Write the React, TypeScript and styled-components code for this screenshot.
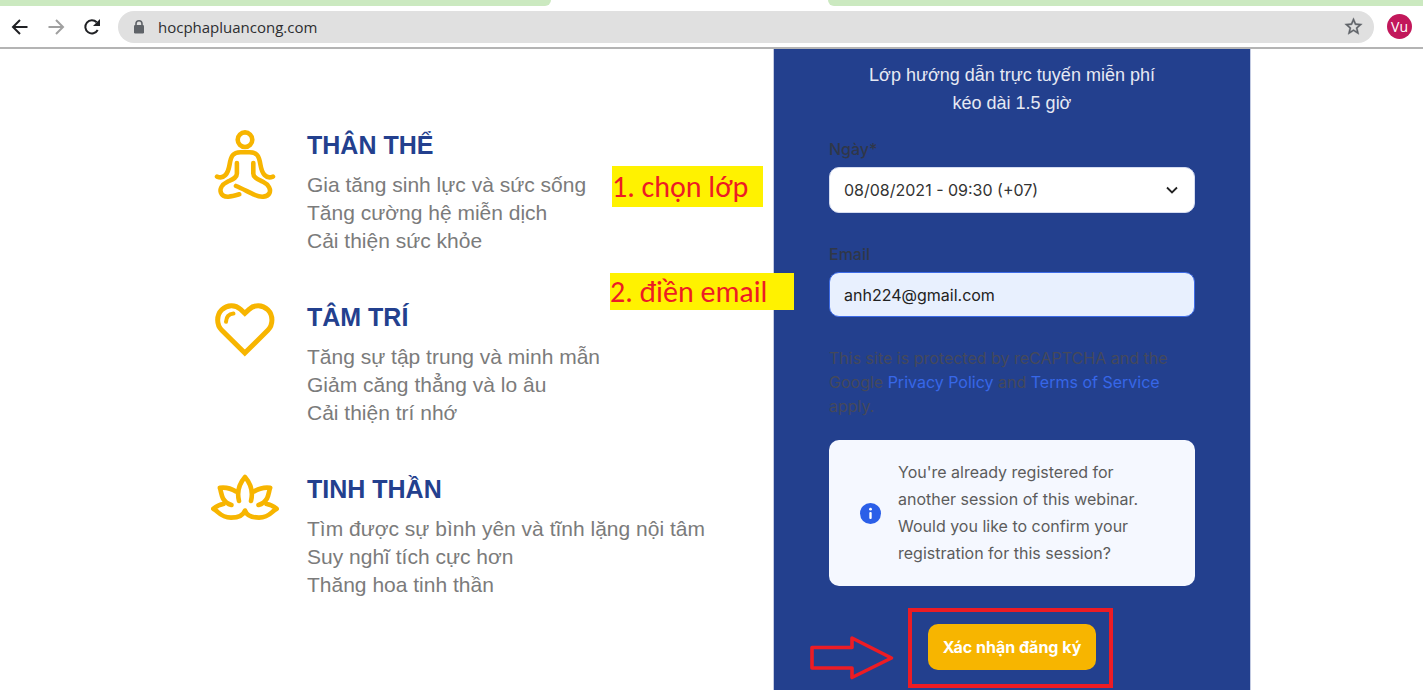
import React from "react";
import styled, { createGlobalStyle } from "styled-components";

const GlobalStyle = createGlobalStyle`
  * { box-sizing: border-box; }
  body {
    margin: 0;
    background: #fff;
    font-family: "Liberation Sans", Arial, sans-serif;
  }
`;

const Page = styled.div`
  display: flex;
  flex-direction: column;
  min-height: 100vh;
  overflow-x: hidden;
`;

/* Browser chrome */
const Chrome = styled.header`
  border-bottom: 2px solid #b4b4b4;
`;

const TabStrip = styled.div`
  display: flex;
  gap: 277px;
  height: 6px;
`;

const TabEdge = styled.div<{ $side: "left" | "right" }>`
  background: #cbe9c0;
  flex: ${(p) => (p.$side === "left" ? "0 1 551px" : "1 1 0")};
  border-radius: ${(p) => (p.$side === "left" ? "0 0 8px 0" : "0 0 0 8px")};
`;

const Toolbar = styled.div`
  display: flex;
  align-items: center;
  height: 41px;
  padding: 0 11px 0 10px;
`;

const NavButton = styled.button<{ $dim?: boolean }>`
  display: grid;
  place-items: center;
  width: 20px;
  height: 20px;
  margin-right: 16px;
  padding: 0;
  border: 0;
  background: none;
  color: ${(p) => (p.$dim ? "#a0a0a0" : "#202124")};
`;

const AddressBar = styled.div`
  display: flex;
  flex: 1;
  align-items: center;
  height: 32px;
  margin-right: 13px;
  padding: 0 10px 0 14px;
  border-radius: 16px;
  background: #e0e0e0;
`;

const Address = styled.input`
  flex: 1;
  min-width: 0;
  margin-left: 12px;
  padding: 0;
  border: 0;
  outline: 0;
  background: none;
  color: #2d2e30;
  font: 15px/24px "Open Sans", sans-serif;
`;

const IconButton = styled.button`
  display: grid;
  place-items: center;
  padding: 0;
  border: 0;
  background: none;
  color: #5f6368;
`;

const Avatar = styled.button`
  width: 25px;
  height: 25px;
  padding: 0;
  border: 0;
  border-radius: 50%;
  background: #c2185b;
  color: #fff;
  font: 14px/25px "Open Sans", sans-serif;
`;

/* Page content */
const Main = styled.main`
  display: flex;
  flex: 1;
  width: 100%;
  max-width: 1079px;
  margin: 0 auto;
`;

const Benefits = styled.section`
  display: flex;
  flex: 1;
  flex-direction: column;
  gap: 46px;
  padding: 80px 0 0 39px;
`;

const Benefit = styled.article`
  display: flex;
  gap: 28px;
`;

const BenefitIcon = styled.svg`
  flex: none;
  width: 68px;
  height: 72px;
  fill: none;
  stroke: #f7b500;
  stroke-width: 4.6;
  stroke-linecap: round;
  stroke-linejoin: round;
`;

const BenefitTitle = styled.h2`
  margin: 0 0 10px;
  color: #23408e;
  font-size: 25px;
  line-height: 32px;
`;

const BenefitList = styled.ul`
  margin: 0;
  padding: 0;
  list-style: none;
  color: #7b7b7b;
  font-size: 21px;
  line-height: 28px;
`;

const Panel = styled.form`
  width: 478px;
  padding: 12px 55px 20px;
  border: solid #c3cbe2;
  border-width: 0 1px;
  background: #23408e;
  font-family: Inter, sans-serif;
`;

const Intro = styled.p`
  margin: 0 0 20px;
  color: #e6e9f3;
  font: 18px/28px "Liberation Sans", Arial, sans-serif;
  text-align: center;
`;

const Field = styled.div`
  position: relative;
  margin-bottom: 29px;
`;

const Label = styled.label`
  display: block;
  margin-bottom: 6px;
  color: #303748;
  font-size: 16px;
  font-weight: 500;
  line-height: 24px;
`;

const SelectWrap = styled.div`
  display: grid;
  align-items: center;

  > * {
    grid-area: 1 / 1;
  }

  > svg {
    justify-self: end;
    margin-right: 16px;
    pointer-events: none;
  }
`;

const Select = styled.select`
  width: 100%;
  height: 46px;
  padding: 0 14px;
  border: 1px solid #d5dcf0;
  border-radius: 10px;
  appearance: none;
  background: #fff;
  color: #333;
  font: 16px Inter, sans-serif;
`;

const Input = styled.input`
  display: block;
  width: 100%;
  height: 45px;
  padding: 0 14px;
  border: 1px solid #3d6be6;
  border-radius: 10px;
  outline: 0;
  background: #e8f0fe;
  color: #222;
  font: 16px Inter, sans-serif;
`;

const Callout = styled.span<{ $gap: number; $width: number; $height: number }>`
  position: absolute;
  bottom: ${(p) => (p.$height > 40 ? 6 : 7)}px;
  right: calc(100% + ${(p) => p.$gap}px);
  width: ${(p) => p.$width}px;
  background: #fff200;
  color: #ed1c24;
  font: 30px/${(p) => p.$height}px Carlito, Lato, "Noto Sans", sans-serif;
  white-space: nowrap;
`;

const Legal = styled.p`
  margin: 0 0 22px;
  color: #45495a;
  font-size: 16px;
  line-height: 24px;

  a {
    color: #3767e8;
    text-decoration: none;
  }
`;

const Notice = styled.div`
  display: flex;
  align-items: center;
  gap: 17px;
  padding: 19px 50px 19px 31px;
  border-radius: 10px;
  background: #f5f8ff;
  color: #5c5c5c;
  font-size: 16px;
  line-height: 27px;

  svg {
    flex: none;
  }

  p {
    margin: 0;
  }
`;

const SubmitRow = styled.div`
  display: flex;
  justify-content: center;
  margin-top: 38px;
`;

const SubmitSpot = styled.div`
  position: relative;
`;

const Submit = styled.button`
  display: block;
  height: 46px;
  padding: 0 15px;
  border: 0;
  border-radius: 10px;
  background: #f7b500;
  color: #fff;
  font: 700 16px Inter, sans-serif;
`;

const RedFrame = styled.span`
  position: absolute;
  inset: -16px -17px -18px -20px;
  border: 4px solid #ed1c24;
  pointer-events: none;
`;

const RedArrow = styled.svg`
  position: absolute;
  top: 10px;
  right: calc(100% + 33px);
`;

const benefits = [
  {
    title: "THÂN THỂ",
    lines: ["Gia tăng sinh lực và sức sống", "Tăng cường hệ miễn dịch", "Cải thiện sức khỏe"],
    icon: (
      <>
        <circle cx="34" cy="10.7" r="7.3" />
        <path d="M6 47.6C13 50.5 17 45 18.6 35.5C20 27 22 23.2 29.5 23.2H38.5C46 23.2 48 27 49.4 35.5C51 45 55 50.5 62 47.6" />
        <path d="M25.9 34V44.5C25.9 49 21 50.5 16.5 52.8C10.5 55.8 8.5 60 10 63.8C12.5 70 21 67.5 28.3 65.3" />
        <path d="M42.3 34V44.5C42.3 49 47.5 50.5 52 52.8C58 55.8 60 60.5 58.5 64C56.5 68.5 49.500 68.5 44 66C38 63.3 31 59.5 25 57" />
      </>
    ),
  },
  {
    title: "TÂM TRÍ",
    lines: ["Tăng sự tập trung và minh mẫn", "Giảm căng thẳng và lo âu", "Cải thiện trí nhớ"],
    icon: (
      <>
        <path strokeLinejoin="miter" strokeWidth="5" d="M33.8 52L10.8 29.3C5.3 23.8 5.3 14.2 10.8 8.8C16.3 3.4 24.3 3.4 29.5 8.3L33.8 12.3L38.1 8.3C43.3 3.4 51.3 3.4 56.8 8.8C62.3 14.2 62.3 23.8 56.8 29.3Z" />
        <path strokeWidth="4" d="M15 20.8C15.3 15.8 18 13 22.5 12.6" />
      </>
    ),
  },
  {
    title: "TINH THẦN",
    lines: ["Tìm được sự bình yên và tĩnh lặng nội tâm", "Suy nghĩ tích cực hơn", "Thăng hoa tinh thần"],
    icon: (
      <>
        <path d="M28 28C25.5 18 28 11 34 4C40 11 42.5 18 40 28" />
        <path d="M25 18.5C20 15.3 15 14 8.8 14.8C10 18 10.3 22 12 25.5C14 29 17 31 20.5 32" />
        <path d="M43 18.5C48 15.3 53 14 59.2 14.8C58 18 57.7 22 56 25.5C54 29 51 31 47.5 32" />
        <path d="M12.500 31C9.500 31.300 5.500 33 2.300 35.800C7.500 38 9 44.600 20 44.600C28 44.600 32.500 42 34 37.500C35.500 42 40 44.600 48 44.600C59 44.600 60.500 38 65.700 35.800C62.500 33 58.500 31.300 55.500 31" />
      </>
    ),
  },
];

export default function App() {
  return (
    <Page>
      <GlobalStyle />
      <Chrome>
        <TabStrip>
          <TabEdge $side="left" />
          <TabEdge $side="right" />
        </TabStrip>
        <Toolbar>
          <NavButton type="button" aria-label="Back">
            <svg width="18" height="18" viewBox="0 0 18 18" fill="none" stroke="currentColor" strokeWidth="2">
              <path d="M16.5 9H2.5M9 2L2 9L9 16" />
            </svg>
          </NavButton>
          <NavButton type="button" aria-label="Forward" $dim>
            <svg width="18" height="18" viewBox="0 0 18 18" fill="none" stroke="currentColor" strokeWidth="2">
              <path d="M1.5 9H15.5M9 2L16 9L9 16" />
            </svg>
          </NavButton>
          <NavButton type="button" aria-label="Reload">
            <svg width="18" height="18" viewBox="0 0 18 18">
              <path d="M14.7 12A6.6 6.6 0 1 1 13.7 4.3" fill="none" stroke="currentColor" strokeWidth="2" />
              <path d="M17 1V8H10Z" fill="currentColor" />
            </svg>
          </NavButton>
          <AddressBar>
            <svg width="14" height="16" viewBox="0 0 14 16">
              <path d="M4 7V4.800a3 3 0 0 1 6 0V7" fill="none" stroke="#5f6368" strokeWidth="1.6" />
              <rect x="2" y="6" width="10" height="8.5" rx="1.2" fill="#5f6368" />
            </svg>
            <Address aria-label="Address" defaultValue="hocphapluancong.com" />
            <IconButton type="button" aria-label="Bookmark">
              <svg width="21" height="21" viewBox="0 0 24 24" fill="currentColor" stroke="currentColor" strokeWidth="0.4">
                <path d="M22 9.240l-7.190-.620L12 2 9.190 8.630 2 9.240l5.460 4.730L5.820 21 12 17.270 18.180 21l-1.630-7.030L22 9.240zM12 15.400l-3.760 2.270 1-4.280-3.320-2.880 4.380-.380L12 6.100l1.710 4.040 4.380.380-3.320 2.880 1 4.280L12 15.400z" />
              </svg>
            </IconButton>
          </AddressBar>
          <Avatar type="button">Vu</Avatar>
        </Toolbar>
      </Chrome>

      <Main>
        <Benefits>
          {benefits.map((b) => (
            <Benefit key={b.title}>
              <BenefitIcon viewBox="0 0 68 72" aria-hidden="true">
                {b.icon}
              </BenefitIcon>
              <div>
                <BenefitTitle>{b.title}</BenefitTitle>
                <BenefitList>
                  {b.lines.map((line) => (
                    <li key={line}>{line}</li>
                  ))}
                </BenefitList>
              </div>
            </Benefit>
          ))}
        </Benefits>

        <Panel onSubmit={(e) => e.preventDefault()}>
          <Intro>
            Lớp hướng dẫn trực tuyến miễn phí
            <br />
            kéo dài 1.5 giờ
          </Intro>
          <Field>
            <Label htmlFor="session">Ngày*</Label>
            <SelectWrap>
              <Select id="session">
                <option>08/08/2021 - 09:30 (+07)</option>
              </Select>
              <svg width="14" height="10" viewBox="0 0 14 10" fill="none" stroke="#222" strokeWidth="1.8">
                <path d="M2 2.500L7 7.500L12 2.500" />
              </svg>
            </SelectWrap>
            <Callout $gap={66} $width={151} $height={41}>1. chọn lớp</Callout>
          </Field>
          <Field>
            <Label htmlFor="email">Email</Label>
            <Input id="email" type="email" defaultValue="anh224@gmail.com" />
            <Callout $gap={35} $width={184} $height={37}>2. điền email</Callout>
          </Field>
          <Legal>
            This site is protected by reCAPTCHA and the Google <a href="#privacy">Privacy Policy</a> and{" "}
            <a href="#terms">Terms of Service</a> apply.
          </Legal>
          <Notice>
            <svg width="21" height="21" viewBox="0 0 21 21">
              <circle cx="10.5" cy="10.5" r="10.5" fill="#2b5fe8" />
              <circle cx="10.5" cy="6.2" r="1.4" fill="#fff" />
              <rect x="9.3" y="9" width="2.4" height="7" rx="1" fill="#fff" />
            </svg>
            <p>
              You're already registered for another session of this webinar. Would you like to confirm your
              registration for this session?
            </p>
          </Notice>
          <SubmitRow>
            <SubmitSpot>
              <Submit type="submit">Xác nhận đăng ký</Submit>
              <RedFrame />
              <RedArrow width="86" height="46" viewBox="0 0 86 46" fill="none" stroke="#ed1c24" strokeWidth="3.6" strokeLinejoin="round">
                <path d="M3 13.5H43V4L82.500 24L43 43.500V34H3Z" />
              </RedArrow>
            </SubmitSpot>
          </SubmitRow>
        </Panel>
      </Main>
    </Page>
  );
}
